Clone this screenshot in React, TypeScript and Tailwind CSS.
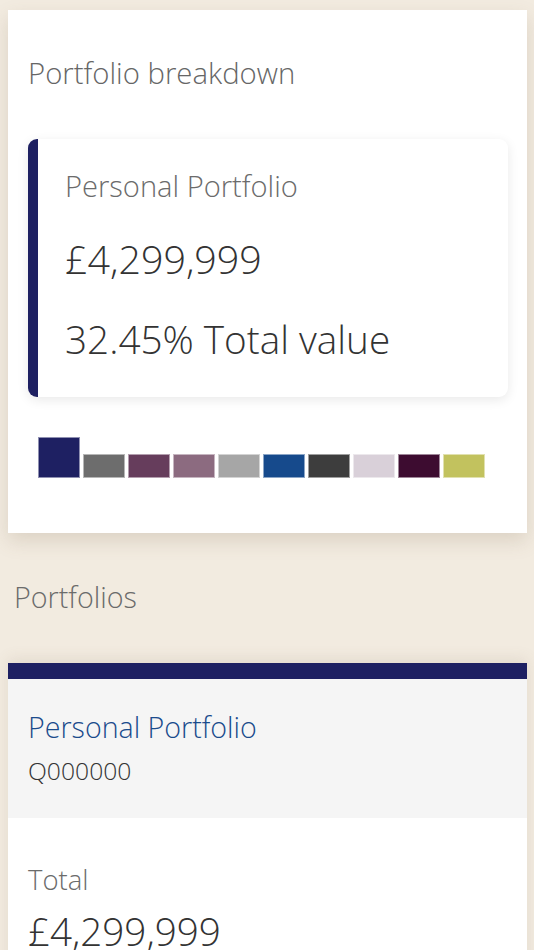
import React from "react";

const swatches = [
  "#1e2062",
  "#6d6d6d",
  "#663d5c",
  "#8c6b80",
  "#a6a6a6",
  "#164a8c",
  "#3d3d3d",
  "#d9d0d9",
  "#3d0c30",
  "#c2c25e",
];

export default function App() {
  return (
    <div
      className="min-h-screen w-[534px] overflow-hidden bg-[#f2ebe0] pt-[10px] font-light"
      style={{ fontFamily: '"Open Sans", "Noto Sans", sans-serif' }}
    >
      {/* Portfolio breakdown card */}
      <section className="mx-[8px] w-[519px] bg-white pl-[20px] pr-[19px] pt-[49px] pb-[55px] shadow-[0_8px_18px_rgba(120,100,70,0.18)]">
        <h2 className="text-[29.3px] leading-none text-[#666666]">Portfolio breakdown</h2>

        <div className="mt-[51px] rounded-[9px] border-l-[10px] border-[#1e2062] bg-white pl-[27px] pt-[33px] pb-[38px] shadow-[0_3px_12px_rgba(0,0,0,0.09)]">
          <div className="text-[29.1px] leading-none text-[#6b6b6b]">Personal Portfolio</div>
          <div className="mt-[39px] text-[39.4px] leading-none text-[#333333]">£4,299,999</div>
          <div className="mt-[40px] text-[38.7px] leading-none text-[#333333]">32.45% Total value</div>
        </div>

        <div className="mt-[40px] flex items-end gap-[3px] pl-[10px]">
          {swatches.map((c, i) => (
            <div
              key={i}
              className={
                i === 0
                  ? "h-[41px] w-[42px] border border-white/50"
                  : "h-[24px] w-[42px] border border-white/50"
              }
              style={{ backgroundColor: c }}
            />
          ))}
        </div>
      </section>

      {/* Portfolios heading */}
      <h2 className="mt-[50px] pl-[14px] text-[28.7px] leading-none text-[#6b6b6b]">Portfolios</h2>

      {/* Portfolio list card */}
      <section className="mx-[8px] mt-[52px] w-[519px] bg-white shadow-[0_-4px_14px_rgba(120,100,70,0.12)]">
        <div className="h-[16px] bg-[#1e2062]" />
        <div className="bg-[#f5f5f5] pl-[20px] pt-[34px] pb-[34px]">
          <div className="text-[28.6px] leading-none text-[#1a4b8c]">Personal Portfolio</div>
          <div className="mt-[17px] text-[24.7px] leading-none text-[#333333]">Q000000</div>
        </div>
        <div className="bg-white pl-[20px] pt-[48px] pb-[40px]">
          <div className="text-[27.5px] leading-none text-[#6b6b6b]">Total</div>
          <div className="mt-[19px] text-[38.6px] leading-none text-[#333333]">£4,299,999</div>
        </div>
      </section>
    </div>
  );
}
